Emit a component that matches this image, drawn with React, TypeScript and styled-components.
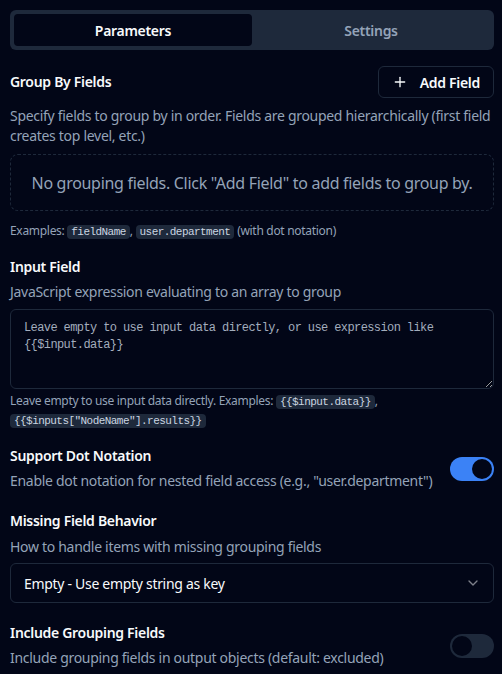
import styled, { createGlobalStyle } from 'styled-components';
import { Plus, ChevronDown } from 'lucide-react';

const GlobalStyle = createGlobalStyle`
  body {
    margin: 0;
    background: #020617;
    color: #f8fafc;
    font-family: 'Noto Sans', 'Open Sans', sans-serif;
    letter-spacing: -0.3px;
  }
`;

const App = () => {
  return (
    <>
      <GlobalStyle />
      <Page>
        <Tabs>
          <Tab $active>Parameters</Tab>
          <Tab>Settings</Tab>
        </Tabs>

        <HeaderRow>
          <Label>Group By Fields</Label>
          <AddButton>
            <Plus size={16} strokeWidth={2} />
            Add Field
          </AddButton>
        </HeaderRow>
        <Description $mt={8}>
          Specify fields to group by in order. Fields are grouped hierarchically (first field
          creates top level, etc.)
        </Description>
        <EmptyBox>No grouping fields. Click "Add Field" to add fields to group by.</EmptyBox>
        <Hint $mt={10}>
          Examples: <Code>fieldName</Code>, <Code>user.department</Code> (with dot notation)
        </Hint>

        <Label $mt={17}>Input Field</Label>
        <Description $mt={5}>JavaScript expression evaluating to an array to group</Description>
        <TextArea placeholder="Leave empty to use input data directly, or use expression like {{$input.data}}" />
        <Hint $mt={2}>
          Leave empty to use input data directly. Examples: <Code>{'{{$input.data}}'}</Code>,{' '}
          <Code>{'{{$inputs["NodeName"].results}}'}</Code>
        </Hint>

        <SwitchRow $mt={17}>
          <div>
            <Label>Support Dot Notation</Label>
            <Description $mt={5}>
              Enable dot notation for nested field access (e.g., "user.department")
            </Description>
          </div>
          <Switch $on>
            <Knob $on />
          </Switch>
        </SwitchRow>

        <Label $mt={20}>Missing Field Behavior</Label>
        <Description $mt={6}>How to handle items with missing grouping fields</Description>
        <Select>
          <span>Empty - Use empty string as key</span>
          <ChevronDown size={16} strokeWidth={2} opacity={0.5} />
        </Select>

        <SwitchRow $mt={20}>
          <div>
            <Label>Include Grouping Fields</Label>
            <Description $mt={5}>
              Include grouping fields in output objects (default: excluded)
            </Description>
          </div>
          <Switch>
            <Knob />
          </Switch>
        </SwitchRow>
      </Page>
    </>
  );
};

export default App;

const Page = styled.div`
  padding: 10px 8px 20px 10px;
  display: flex;
  flex-direction: column;
`;

const Tabs = styled.div`
  display: grid;
  grid-template-columns: 1fr 1fr;
  height: 40px;
  box-sizing: border-box;
  padding: 4px;
  background: #1e293b;
  border-radius: 6px;
`;

const Tab = styled.div<{ $active?: boolean }>`
  display: flex;
  align-items: center;
  justify-content: center;
  border-radius: 4px;
  font-size: 14px;
  font-weight: 600;
  color: ${(p) => (p.$active ? '#f8fafc' : '#94a3b8')};
  background: ${(p) => (p.$active ? '#020617' : 'transparent')};
`;

const HeaderRow = styled.div`
  margin-top: 16px;
  display: flex;
  align-items: center;
  justify-content: space-between;
`;

const Label = styled.div<{ $mt?: number }>`
  margin-top: ${(p) => p.$mt ?? 0}px;
  font-size: 14px;
  line-height: 20px;
  font-weight: 600;
  color: #f8fafc;
`;

const Description = styled.div<{ $mt?: number }>`
  margin-top: ${(p) => p.$mt ?? 0}px;
  font-size: 14px;
  line-height: 20px;
  color: #94a3b8;
`;

const AddButton = styled.button`
  display: flex;
  align-items: center;
  gap: 12px;
  height: 32px;
  padding: 0 13px;
  background: #020617;
  border: 1px solid #1e293b;
  border-radius: 6px;
  color: #f8fafc;
  font-family: inherit;
  letter-spacing: inherit;
  font-size: 14px;
  font-weight: 600;
`;

const EmptyBox = styled.div`
  margin-top: 8px;
  height: 57px;
  box-sizing: border-box;
  display: flex;
  align-items: center;
  justify-content: center;
  border: 1px dashed #1e293b;
  border-radius: 8px;
  font-size: 16px;
  color: #94a3b8;
`;

const Hint = styled.div<{ $mt?: number }>`
  margin-top: ${(p) => p.$mt ?? 0}px;
  font-size: 12px;
  line-height: 19px;
  color: #94a3b8;
`;

const Code = styled.code`
  display: inline-block;
  line-height: 14px;
  font-family: 'Liberation Mono', 'DejaVu Sans Mono', monospace;
  font-size: 11px;
  letter-spacing: -0.55px;
  background: #1e293b;
  color: #cbd5e1;
  border-radius: 4px;
  padding: 0 4px;
`;

const TextArea = styled.textarea`
  margin-top: 7px;
  height: 80px;
  box-sizing: border-box;
  padding: 10px 13px 8px;
  resize: vertical;
  background: #020617;
  border: 1px solid #1e293b;
  border-radius: 6px;
  color: #f8fafc;
  font-family: 'Liberation Mono', 'DejaVu Sans Mono', monospace;
  font-size: 12px;
  line-height: 17px;
  letter-spacing: -0.6px;
  outline: none;
  &::placeholder {
    color: #a3adbd;
  }
`;

const SwitchRow = styled.div<{ $mt?: number }>`
  margin-top: ${(p) => p.$mt ?? 0}px;
  display: flex;
  align-items: center;
  justify-content: space-between;
  gap: 16px;
`;

const Switch = styled.div<{ $on?: boolean }>`
  flex-shrink: 0;
  width: 44px;
  height: 24px;
  box-sizing: border-box;
  padding: 2px;
  border-radius: 12px;
  display: flex;
  justify-content: ${(p) => (p.$on ? 'flex-end' : 'flex-start')};
  background: ${(p) => (p.$on ? '#3b82f6' : '#1e293b')};
`;

const Knob = styled.div<{ $on?: boolean }>`
  width: 20px;
  height: 20px;
  border-radius: 50%;
  background: #020617;
`;

const Select = styled.div`
  margin-top: 6px;
  height: 40px;
  box-sizing: border-box;
  padding: 0 12px 0 13px;
  display: flex;
  align-items: center;
  justify-content: space-between;
  border: 1px solid #1e293b;
  border-radius: 6px;
  font-size: 14px;
  color: #f8fafc;
`;
